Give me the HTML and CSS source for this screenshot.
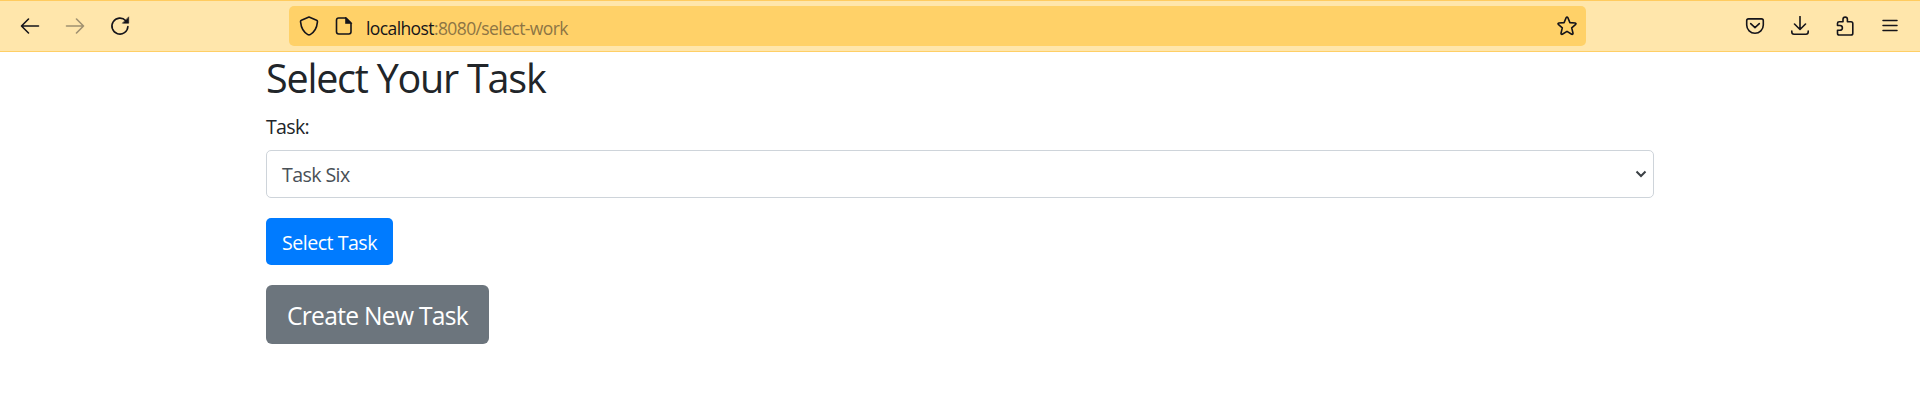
FILE: index.html
```html
<!DOCTYPE html>
<html lang="en">
<head>
<meta charset="utf-8">
<title>Select Your Task</title>
<link rel="stylesheet" href="styles.css">
</head>
<body>
<header class="toolbar">
  <nav class="nav">
    <svg class="icon" viewBox="0 0 20 20"><path d="M18.500 10H2M8.500 3 1.500 10 8.500 17"/></svg>
    <svg class="icon disabled" viewBox="0 0 20 20"><path d="M1.500 10h17M11.500 3l7 7-7 7"/></svg>
    <svg class="icon" viewBox="0 0 20 20"><path d="M17.900 10.500A8 8 0 1 1 15.800 4.700"/><path class="solid" d="M18.700 1.200v6h-6z"/></svg>
  </nav>
  <div class="urlbar">
    <svg class="icon" viewBox="0 0 20 20"><path d="M10 1.100 17.600 4.300Q18.700 4.800 18.400 6.200C17.800 12.300 14.800 16.600 11.200 18.600Q10 19.200 8.800 18.600C5.200 16.600 2.200 12.300 1.600 6.200Q1.300 4.800 2.400 4.300Z"/></svg>
    <svg class="icon page" viewBox="0 0 20 20"><path d="M12 2H4.700Q2.500 2 2.500 4.200V15.800Q2.500 18 4.700 18H14.800Q17 18 17 15.800V7Z"/><path class="solid" d="M11.500 1.500v6h6z"/></svg>
    <div class="url"><span class="host">localhost</span>:8080/select-work</div>
    <svg class="icon star" viewBox="0 0 20 20"><path d="M9.100 1.700Q10 .5 10.900 1.700L12.900 6.600 18.200 7Q19.500 7.300 18.700 8.400L14.700 11.900 16 17.200Q16 18.700 14.700 18.300L10 15.400 5.300 18.300Q4 18.700 4 17.200L5.300 11.900 1.300 8.400Q.5 7.300 1.800 7L7.100 6.600Z"/></svg>
  </div>
  <div class="tools">
    <svg class="icon" viewBox="0 0 20 20"><path d="M3.500 2.900h13Q18.300 2.900 18.300 4.700V9A8.300 8.300 0 0 1 1.700 9V4.700Q1.700 2.900 3.500 2.900ZM5.700 7.600l4.300 4 4.300-4"/></svg>
    <svg class="icon" viewBox="0 0 20 20"><path d="M10 .5V13.200M4.500 8l5.500 5.500L15.500 8M1.800 15v1Q1.800 18.200 4 18.200H16Q18.200 18.200 18.200 16V15"/></svg>
    <svg class="icon" viewBox="0 0 20 20"><path d="M2.500 9.500V7.200Q2.500 5.700 4.200 5.700H8V3.300a2.200 2.200 0 0 1 4.400 0V5.700H16Q17.800 5.700 17.800 7.500V17.200Q17.800 19 16 19H4.200Q2.500 19 2.500 17.200V14.300H5a2.400 2.400 0 0 0 0-4.800Z"/></svg>
    <svg class="icon menu" viewBox="0 0 20 20"><path d="M3 4.500h14M3 9.500h14M3 14.500h14"/></svg>
  </div>
</header>
<main class="container">
  <h2 class="title">Select Your Task</h2>
  <label class="label" for="task">Task:</label>
  <div class="select" id="task">
    <span>Task Six</span>
    <svg class="chevron" viewBox="0 0 12 8"><path d="m1.500 1.500 4.500 4.500 4.500-4.500"/></svg>
  </div>
  <button class="btn primary">Select Task</button>
  <button class="btn secondary">Create New Task</button>
</main>
</body>
</html>
```
FILE: styles.css
```css
* { box-sizing: border-box; }
body {
  margin: 0;
  background: #fff;
  color: #212529;
  font-family: "Open Sans", "Noto Sans", sans-serif;
}
.toolbar {
  display: flex;
  align-items: center;
  height: 52px;
  padding: 0 20px;
  background: #ffe6ab;
  border-top: 1px solid #ffcb5f;
  border-bottom: 1px solid #ffcf66;
}
.icon {
  display: block;
  flex: none;
  width: 20px;
  height: 20px;
  fill: none;
  stroke: #15141a;
  stroke-width: 1.6;
  stroke-linecap: round;
  stroke-linejoin: round;
}
.icon .solid { fill: #15141a; stroke-width: .6; }
.disabled { opacity: .4; }
.nav { display: flex; gap: 25px; width: 269px; }
.urlbar {
  display: flex;
  align-items: center;
  width: 1297px;
  height: 40px;
  padding: 0 9px 0 10px;
  background: #ffd168;
  border-radius: 5px;
}
.page { margin-left: 15px; }
.url {
  flex: 1;
  margin-left: 12px;
  padding-top: 3px;
  font-size: 17.500px;
  line-height: 24px;
  letter-spacing: -.600px;
  color: #8d7544;
}
.host { color: #15141a; }
.tools { display: flex; gap: 25px; margin-left: auto; }
.menu { stroke-width: 1.500; }
.container {
  display: flex;
  flex-direction: column;
  align-items: flex-start;
  width: 1388px;
  margin: 0 auto;
}
.title {
  margin: 2px 0 9px;
  font-size: 39.500px;
  font-weight: 400;
  line-height: 48px;
  letter-spacing: -1.220px;
}
.label {
  margin: 1px 0 8px;
  font-size: 19.600px;
  line-height: 30px;
  letter-spacing: -.700px;
}
.select {
  display: flex;
  align-items: center;
  justify-content: space-between;
  width: 100%;
  height: 48px;
  padding: 0 6px 0 15px;
  border: 1px solid #ced4da;
  border-radius: 5px;
  font-size: 19.600px;
  letter-spacing: -.600px;
  color: #495057;
}
.chevron {
  width: 12px;
  height: 8px;
  fill: none;
  stroke: #3b4045;
  stroke-width: 2;
}
.btn {
  border: 0;
  border-radius: 5px;
  padding: 2px 0 0;
  color: #fff;
  font-family: inherit;
}
.primary {
  width: 127px;
  height: 47px;
  margin: 20px 0;
  background: #007bff;
  font-size: 19.600px;
  letter-spacing: -.500px;
}
.secondary {
  width: 223px;
  height: 59px;
  background: #6c757d;
  border-radius: 6px;
  font-size: 24.600px;
  letter-spacing: -.700px;
}
```
